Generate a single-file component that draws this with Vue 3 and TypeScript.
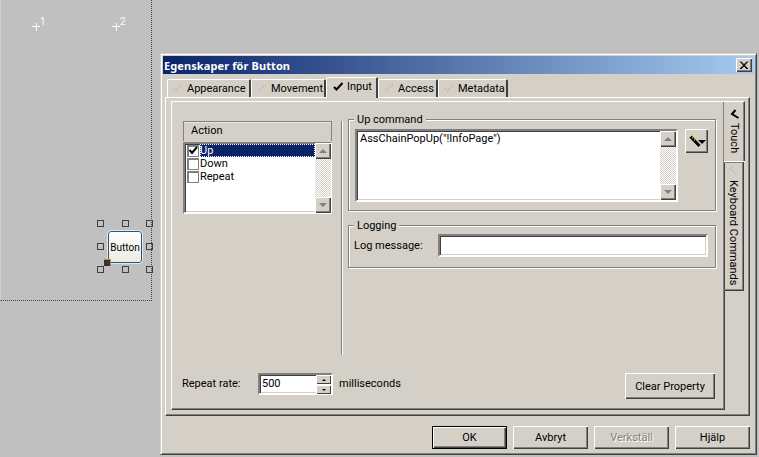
<script setup lang="ts">
interface TabItem { label: string; width: number; active?: boolean }
const tabs: TabItem[] = [
  { label: 'Appearance', width: 84 },
  { label: 'Movement', width: 75 },
  { label: 'Input', width: 52, active: true },
  { label: 'Access', width: 60 },
  { label: 'Metadata', width: 70 },
]
const actions = [
  { label: 'Up', checked: true },
  { label: 'Down', checked: false },
  { label: 'Repeat', checked: false },
]
const footerButtons = [
  { label: 'OK', kind: 'default' },
  { label: 'Avbryt', kind: '' },
  { label: 'Verkställ', kind: 'disabled' },
  { label: 'Hjälp', kind: '' },
]
const handles = [
  [97, 220], [122, 220], [146, 220],
  [97, 243], [146, 243],
  [97, 266], [122, 266], [146, 266],
]
const pins = [
  { x: 32, y: 22, n: '1' },
  { x: 112, y: 22, n: '2' },
]
</script>

<template>
  <div class="desktop">
    <div class="design-area"></div>
    <div v-for="p in pins" :key="p.n" class="pin" :style="{ left: p.x + 'px', top: p.y + 'px' }">
      <svg width="12" height="9" viewBox="0 0 12 9">
        <path d="M0 4.5H8M4.5 1V9" stroke="#fff" fill="none" />
      </svg>
      <span class="pin-num">{{ p.n }}</span>
    </div>
    <div v-for="(h, i) in handles" :key="i" class="handle" :style="{ left: h[0] + 'px', top: h[1] + 'px' }"></div>
    <div class="canvas-button">Button</div>
    <div class="anchor"></div>

    <div class="window">
      <div class="titlebar">
        <span class="title">Egenskaper för Button</span>
        <button class="close" aria-label="Stäng">
          <svg width="10" height="9" viewBox="0 0 10 9">
            <path d="M1 0.5L8 8M2 0.5L9 8M8 0.5L1 8M9 0.5L2 8" stroke="#000" fill="none" />
          </svg>
        </button>
      </div>

      <div class="tabstrip">
        <div
          v-for="t in tabs"
          :key="t.label"
          class="tab"
          :class="{ active: t.active }"
          :style="{ width: t.width + 'px' }"
        >
          <svg v-if="t.active" class="tick" width="11" height="9" viewBox="0 0 11 9">
            <path d="M1 5L3.5 7.5L9.5 1" stroke="#000" stroke-width="2" fill="none" />
          </svg>
          <svg v-else class="tick" width="9" height="9" viewBox="0 0 9 9">
            <path d="M0 5h1M2 7h1M3 5h1M5 3h1M7 1h1" stroke="#a9a69f" fill="none" />
          </svg>
          <span>{{ t.label }}</span>
        </div>
      </div>

      <div class="outer-panel">
        <div class="inner-panel">
          <div class="main">
            <div class="left-col">
              <div class="list-header">Action</div>
              <div class="listbox sunken">
                <div class="list-rows">
                  <div v-for="a in actions" :key="a.label" class="list-row">
                    <span class="check">
                      <svg v-if="a.checked" width="9" height="9" viewBox="0 0 9 9">
                        <path d="M0.5 4L3 7L8 1" stroke="#000" stroke-width="2" fill="none" />
                      </svg>
                    </span>
                    <span class="row-label" :class="{ selected: a.checked }">{{ a.label }}</span>
                  </div>
                </div>
                <div class="scrollbar list-scroll">
                  <div class="sb-btn"><i class="tri up"></i></div>
                  <div class="sb-track"></div>
                  <div class="sb-btn"><i class="tri down"></i></div>
                </div>
              </div>
            </div>

            <div class="separator"></div>

            <div class="right-col">
              <fieldset class="group group-cmd">
                <legend>Up command</legend>
                <div class="cmd-row">
                  <div class="textarea sunken">
                    <div class="code">AssChainPopUp("!InfoPage")</div>
                    <div class="scrollbar">
                      <div class="sb-btn"><i class="tri up"></i></div>
                      <div class="sb-track"></div>
                      <div class="sb-btn"><i class="tri down"></i></div>
                    </div>
                  </div>
                  <button class="btn wand" aria-label="Wizard">
                    <svg width="23" height="24" viewBox="0 0 23 24">
                      <path d="M5.5 7.5L14.5 17" stroke="#000" stroke-width="3" fill="none" />
                      <path d="M5 7h1M7 9h1M9 11h1" stroke="#fff" fill="none" />
                      <path d="M7 5.5h1M9 5.5h1M11 5.5h1M8 7.5h1M10 7.5h1M6 4.5h1" stroke="#f0e800" fill="none" />
                      <path d="M13 11H21L17 15Z" fill="#000" />
                    </svg>
                  </button>
                </div>
              </fieldset>

              <fieldset class="group group-log">
                <legend>Logging</legend>
                <div class="log-row">
                  <label class="log-label">Log message:</label>
                  <div class="field sunken"></div>
                </div>
              </fieldset>
            </div>
          </div>

          <div class="bottom-row">
            <span class="rate-label">Repeat rate:</span>
            <div class="spinner sunken">
              <span class="spin-value">500</span>
              <div class="spin-btns">
                <div class="spin-btn"><i class="tri-s up"></i></div>
                <div class="spin-btn"><i class="tri-s down"></i></div>
              </div>
            </div>
            <span class="rate-unit">milliseconds</span>
            <button class="btn clear">Clear Property</button>
          </div>
        </div>

        <div class="side-tabs">
          <div class="side-tab active">
            <svg class="side-tick" width="9" height="11" viewBox="0 0 9 11">
              <path d="M5.5 2L2 6L8.5 10" stroke="#000" stroke-width="2" fill="none" />
            </svg>
            <span class="side-label">Touch</span>
          </div>
          <div class="side-tab inactive">
            <svg class="side-tick" width="9" height="9" viewBox="0 0 9 9">
              <path d="M1 1v1M3 3v1M5 5v1M7 7v1M3 0v1" stroke="#a9a69f" fill="none" />
            </svg>
            <span class="side-label">Keyboard Commands</span>
          </div>
        </div>
      </div>

      <div class="footer">
        <button v-for="b in footerButtons" :key="b.label" class="btn foot" :class="b.kind">{{ b.label }}</button>
      </div>
    </div>
  </div>
</template>

<style>
html, body { margin: 0; padding: 0; background: #c0c0c0; }
</style>

<style scoped>
* { box-sizing: border-box; }
.desktop {
  position: relative;
  width: 759px;
  height: 457px;
  overflow: hidden;
  background: #c0c0c0;
  font-family: Roboto, "Noto Sans", sans-serif;
  font-size: 11px;
  line-height: 13px;
  color: #000;
}
.design-area {
  position: absolute;
  left: 0;
  top: -2px;
  width: 152px;
  height: 303px;
  border-left: 1px solid #d4d0c8;
  border-right: 1px dotted #404040;
  border-bottom: 1px dotted #404040;
}
.pin { position: absolute; width: 14px; height: 12px; }
.pin svg { position: absolute; left: 0; top: 0; }
.pin-num {
  position: absolute;
  left: 8px;
  top: -5px;
  color: #fff;
  font-size: 10px;
  line-height: 10px;
}
.handle {
  position: absolute;
  width: 7px;
  height: 7px;
  border: 1px solid #404040;
}
.anchor {
  position: absolute;
  left: 104px;
  top: 259px;
  width: 7px;
  height: 7px;
  background: #333;
  box-shadow: inset -2px 2px 0 -1px #c8843c;
}
.canvas-button {
  position: absolute;
  left: 108px;
  top: 231px;
  width: 34px;
  height: 32px;
  border: 1px solid #1c5a8c;
  border-radius: 3px;
  outline: 1px solid #e8e8e0;
  background: linear-gradient(#ffffff, #ecece4);
  font-size: 10px;
  line-height: 31px;
  text-align: center;
  white-space: nowrap;
}

.window {
  position: absolute;
  left: 160px;
  top: 53px;
  width: 597px;
  height: 402px;
  padding: 1px;
  background: #d4d0c8;
  border-style: solid;
  border-width: 1px;
  border-color: #d4d0c8 #404040 #404040 #d4d0c8;
  box-shadow: inset 1px 1px 0 #fff, inset -1px -1px 0 #808080;
  display: flex;
  flex-direction: column;
}
.titlebar {
  margin: 1px;
  height: 18px;
  flex: none;
  display: flex;
  align-items: center;
  justify-content: space-between;
  padding: 0 2px 0 1px;
  background: linear-gradient(90deg, #0a246a, #a6caf0);
}
.title {
  color: #fff;
  font-weight: 700;
  font-size: 11px;
  font-family: "Noto Sans", sans-serif;
  letter-spacing: 0.1px;
}
.close {
  width: 16px;
  height: 14px;
  padding: 0;
  background: #d4d0c8;
  border: none;
  box-shadow: inset 1px 1px 0 #fff, inset -1px -1px 0 #404040, inset -2px -2px 0 #808080;
  display: flex;
  align-items: center;
  justify-content: center;
}

.tabstrip {
  display: flex;
  align-items: flex-end;
  height: 20px;
  margin-top: 2px;
  padding-left: 5px;
  flex: none;
}
.tab {
  height: 18px;
  flex: none;
  display: flex;
  align-items: center;
  gap: 4px;
  padding: 0 0 0 6px;
  border-top: 1px solid #fff;
  border-left: 1px solid #fff;
  border-right: 2px solid #404040;
  border-radius: 2px 2px 0 0;
  white-space: nowrap;
}
.tab.active {
  height: 21px;
  margin-bottom: -1px;
  padding-left: 6px;
  padding-bottom: 3px;
  gap: 3px;
  position: relative;
  z-index: 1;
  background: #d4d0c8;
}
.tick { flex: none; }

.outer-panel {
  margin: 0 5px 0 3px;
  height: 319px;
  flex: none;
  display: flex;
  padding: 3px 0 5px 5px;
  border-top: 1px solid #fff;
  border-left: 1px solid #fff;
  border-right: 1px solid #404040;
  border-bottom: 1px solid #404040;
  box-shadow: inset -1px -1px 0 #808080;
}
.inner-panel {
  width: 554px;
  flex: none;
  display: flex;
  flex-direction: column;
  border-top: 1px solid #fff;
  border-left: 1px solid #fff;
  border-right: 1px solid #404040;
  border-bottom: 1px solid #404040;
  box-shadow: inset -1px -1px 0 #808080;
}
.main {
  display: flex;
  height: 253px;
  padding-left: 11px;
  flex: none;
}
.left-col { width: 149px; flex: none; margin-top: 19px; }
.list-header {
  height: 20px;
  padding: 1px 0 0 7px;
  border-top: 1px solid #808080;
  border-left: 1px solid #808080;
  border-right: 1px solid #808080;
  box-shadow: inset 0 1px 0 #e8e6e0;
  line-height: 15px;
}
.sunken {
  border: 2px solid;
  border-color: #808080 #ffffff #ffffff #808080;
  box-shadow: inset 1px 1px 0 #404040, inset -1px -1px 0 #d4d0c8;
  background: #fff;
}
.listbox {
  margin-top: 1px;
  height: 72px;
  display: flex;
}
.list-rows { flex: 1; padding: 0 0 0 2px; min-width: 0; }
.list-row { height: 13px; display: flex; align-items: center; }
.check {
  width: 12px;
  height: 12px;
  flex: none;
  border: 1px solid #808080;
  box-shadow: inset 1px 1px 0 #808080;
  background: #fff;
  display: flex;
  align-items: center;
  justify-content: center;
  margin-right: 1px;
}
.row-label { flex: 1; height: 13px; padding-left: 0; }
.row-label.selected {
  background: #0a246a;
  color: #fff;
  outline: 1px dotted #fff;
  outline-offset: -1px;
}
.scrollbar {
  width: 16px;
  flex: none;
  display: flex;
  flex-direction: column;
}
.list-scroll { margin: -1px -1px -1px 0; }
.sb-btn {
  height: 16px;
  flex: none;
  background: #d4d0c8;
  box-shadow: inset 1px 1px 0 #fff, inset -1px -1px 0 #404040, inset -2px -2px 0 #808080;
  display: flex;
  align-items: center;
  justify-content: center;
}
.sb-track {
  flex: 1;
  background: repeating-conic-gradient(#d4d0c8 0 25%, #fff 0 50%) 0 0 / 2px 2px;
}
.tri { width: 0; height: 0; border-left: 4px solid transparent; border-right: 4px solid transparent; }
.tri.up { border-bottom: 4px solid #808080; }
.tri.down { border-top: 4px solid #808080; }

.separator {
  width: 2px;
  flex: none;
  margin: 19px 5px 0 9px;
  background: #808080;
  box-shadow: inset -1px 0 0 #fff;
}
.right-col { width: 368px; flex: none; margin-top: 11px; }
.group {
  margin: 0;
  padding: 0;
  min-width: 0;
  border: 1px solid #808080;
  box-shadow: inset 1px 1px 0 #fff, 1px 1px 0 #fff;
  background: transparent;
}
.group legend {
  margin-left: 5px;
  padding: 0 3px;
  height: 13px;
  background: #d4d0c8;
  line-height: 13px;
}
.group-cmd { height: 98px; }
.cmd-row { display: flex; padding: 3px 0 0 6px; align-items: flex-start; gap: 7px; }
.textarea {
  width: 323px;
  height: 73px;
  display: flex;
}
.code { flex: 1; padding: 1px 0 0 3px; white-space: nowrap; line-height: 14px; }
.btn {
  font: inherit;
  color: #000;
  padding: 0;
  background: #d4d0c8;
  border: none;
  box-shadow: inset 1px 1px 0 #fff, inset -1px -1px 0 #404040, inset -2px -2px 0 #808080;
  white-space: nowrap;
}
.wand {
  width: 23px;
  height: 24px;
  flex: none;
  display: block;
}
.wand svg { display: block; }
.group-log { height: 49px; margin-top: 8px; }
.log-row { display: flex; align-items: center; padding: 2px 0 0 5px; }
.log-label { width: 84px; flex: none; }
.field { width: 270px; height: 23px; }

.bottom-row {
  display: flex;
  align-items: flex-start;
  padding: 18px 9px 0 10px;
  flex: none;
}
.rate-label { width: 76px; flex: none; margin-top: 4px; }
.spinner {
  width: 75px;
  height: 22px;
  flex: none;
  display: flex;
  justify-content: space-between;
}
.spin-value { padding: 2px 0 0 2px; line-height: 14px; }
.spin-btns { width: 15px; flex: none; display: flex; flex-direction: column; gap: 1px; }
.spin-btn {
  height: 9px;
  flex: none;
  background: #d4d0c8;
  box-shadow: inset 1px 1px 0 #fff, inset -1px -1px 0 #404040;
  display: flex;
  align-items: center;
  justify-content: center;
}
.tri-s { width: 0; height: 0; border-left: 2px solid transparent; border-right: 2px solid transparent; }
.tri-s.up { border-bottom: 2px solid #000; }
.tri-s.down { border-top: 2px solid #000; }
.rate-unit { margin: 4px 0 0 6px; flex: 1; }
.clear { width: 90px; height: 26px; flex: none; }

.side-tabs { flex: none; width: 23px; display: flex; flex-direction: column; align-items: flex-start; }
.side-tab {
  display: flex;
  flex-direction: column;
  align-items: center;
}
.side-tab.active {
  width: 21px;
  height: 60px;
  margin-left: -1px;
  padding-top: 6px;
  background: #d4d0c8;
  border-top: 1px solid #fff;
  border-right: 1px solid #404040;
  box-shadow: inset -1px 0 0 #808080, 0 1px 0 #fff;
  position: relative;
  z-index: 1;
}
.side-tab.inactive {
  width: 20px;
  height: 130px;
  margin-left: -1px;
  padding-top: 5px;
  border-top: 1px solid #404040;
  border-right: 1px solid #404040;
  border-bottom: 1px solid #404040;
  box-shadow: inset 0 1px 0 #808080, inset -1px -1px 0 #808080;
}
.side-label {
  writing-mode: vertical-rl;
  margin-top: 4px;
  white-space: nowrap;
  line-height: 13px;
}

.footer {
  display: flex;
  justify-content: flex-end;
  gap: 6px;
  padding: 10px 5px 0 0;
  flex: none;
}
.foot { width: 75px; height: 23px; flex: none; }
.foot.default {
  outline: 1px solid #000;
  outline-offset: -1px;
  box-shadow: inset 2px 2px 0 #fff, inset -2px -2px 0 #404040, inset -3px -3px 0 #808080;
}
.foot.disabled { color: #808080; text-shadow: 1px 1px 0 #fff; }
</style>
